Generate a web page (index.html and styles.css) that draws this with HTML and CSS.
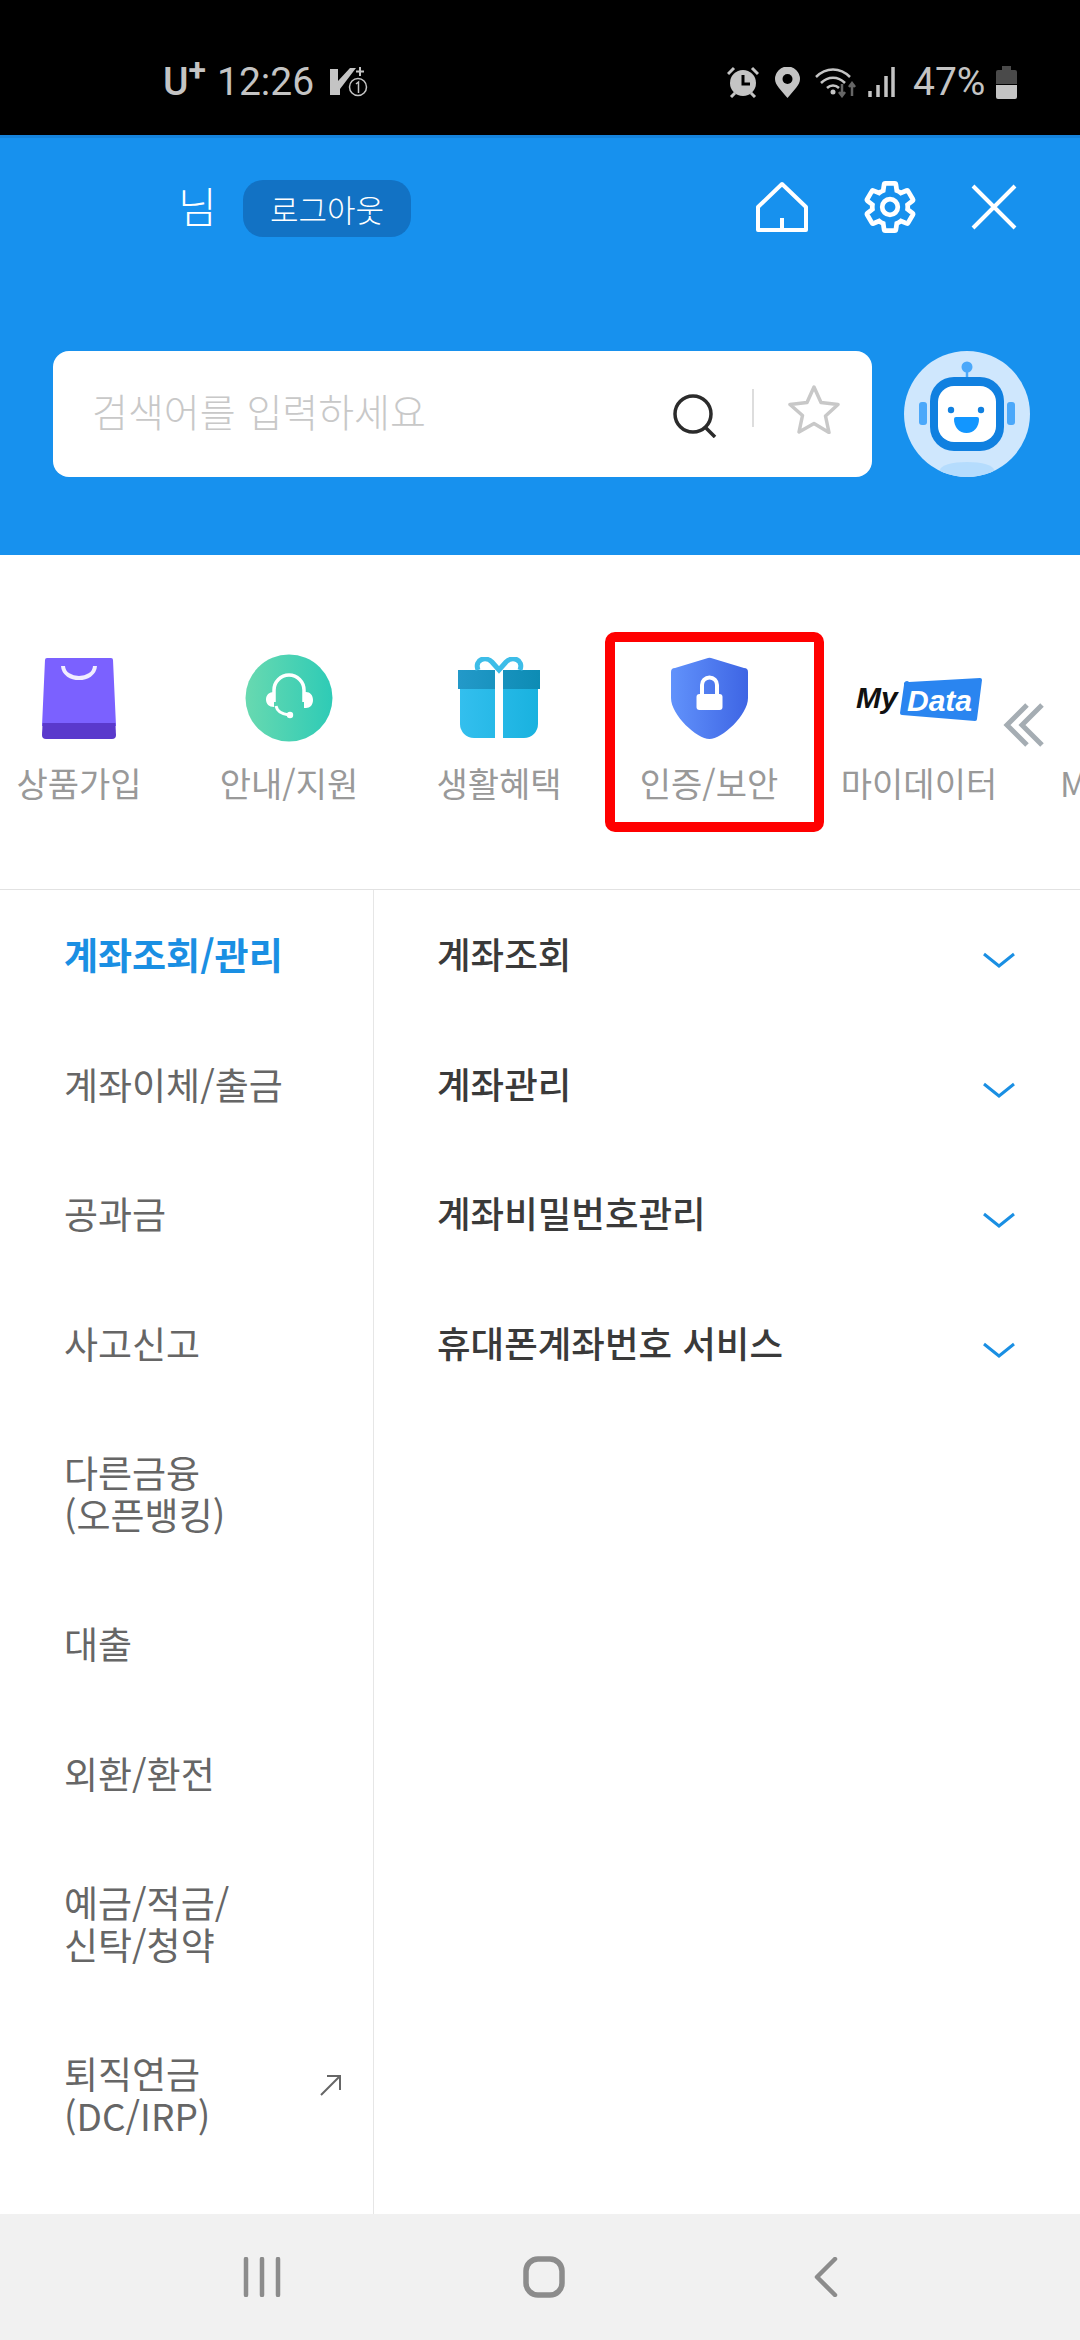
FILE: index.html
```html
<!DOCTYPE html>
<html lang="ko">
<head>
    <meta charset="UTF-8">
    <meta name="viewport" content="width=device-width, initial-scale=1.0">
    <title>전체메뉴</title>
    <link rel="stylesheet" href="styles.css">
</head>
<body>
    <div class="status-bar">
        <div class="carrier">U<sup>+</sup></div>
        <div class="clock">12:26</div>
        <svg class="volte" width="38" height="30" viewBox="0 0 38 30">
            <path d="M0 2h8v12L20 1h6L10 22v6H0z" fill="#c4c4c4"/>
            <path d="M30 0v9M26 4.500h8" stroke="#c4c4c4" stroke-width="2" fill="none"/>
            <circle cx="28" cy="20" r="8.500" fill="#000" stroke="#c4c4c4" stroke-width="1.500"/>
            <path d="M26 17l2.500-2v11" stroke="#c4c4c4" stroke-width="1.500" fill="none"/>
        </svg>
        <div class="status-right">
            <svg width="32" height="32" viewBox="0 0 32 32">
                <circle cx="16" cy="17" r="13" fill="#c4c4c4"/>
                <path d="M16 9v9h7" stroke="#000" stroke-width="3" fill="none"/>
                <path d="M1 8l6-6M31 8l-6-6M4 31l4-4M28 31l-4-4" stroke="#c4c4c4" stroke-width="3"/>
            </svg>
            <svg class="pin" width="25" height="31" viewBox="0 0 25 31">
                <path d="M12.500 31C6 23 0 18 0 12a12.500 12.500 0 0 1 25 0c0 6-6 11-12.500 19z" fill="#c4c4c4"/>
                <circle cx="12.500" cy="12" r="5" fill="#000"/>
            </svg>
            <svg class="wifi" width="42" height="32" viewBox="0 0 42 32">
                <path d="M1 11C11 1 25 1 35 11M6 17c7-7 17-7 24 0M12 22c3.500-3.500 8.500-3.500 12 0" stroke="#c4c4c4" stroke-width="2.500" fill="none"/>
                <circle cx="18" cy="26" r="2.500" fill="#c4c4c4"/>
                <path d="M27 18v12M24 26l3 4 3-4" stroke="#666" stroke-width="2.500" fill="none"/>
                <path d="M37 30V17M34 21l3-4 3 4" stroke="#666" stroke-width="2.500" fill="none"/>
            </svg>
            <svg class="signal" width="27" height="30" viewBox="0 0 27 30">
                <path d="M2 30v-6M10 30V18M18 30V9M25 30V0" stroke="#c4c4c4" stroke-width="3.500" fill="none"/>
            </svg>
            <div class="battery-text">47%</div>
            <svg class="battery" width="21" height="33" viewBox="0 0 21 33">
                <path d="M6 0h9v4H6z" fill="#4a4a4a"/>
                <path d="M2 4h17a2 2 0 0 1 2 2v12H0V6a2 2 0 0 1 2-2z" fill="#4a4a4a"/>
                <path d="M0 19h21v12a2 2 0 0 1-2 2H2a2 2 0 0 1-2-2z" fill="#c4c4c4"/>
            </svg>
        </div>
    </div>

    <header class="app-header">
        <div class="top-row">
            <span class="user-name">님</span>
            <button class="logout-btn">로그아웃</button>
            <div class="top-icons">
                <svg width="54" height="52" viewBox="0 0 54 52">
                    <path d="M27 3L3 26v23h48V26zM27 49V37" stroke="#fff" stroke-width="4" fill="none" stroke-linejoin="round"/>
                </svg>
                <svg width="52" height="52" viewBox="1 1 22 22">
                    <path d="M19.430 12.980c.04-.32.07-.64.07-.98s-.03-.66-.07-.98l2.110-1.650c.19-.15.24-.42.12-.64l-2-3.460c-.12-.22-.39-.3-.61-.22l-2.490 1c-.52-.4-1.080-.73-1.690-.98l-.38-2.650C14.460 2.180 14.250 2 14 2h-4c-.25 0-.46.18-.49.42l-.38 2.650c-.61.25-1.170.59-1.690.98l-2.490-1c-.23-.09-.49 0-.61.22l-2 3.460c-.13.22-.07.49.12.64l2.110 1.650c-.04.32-.07.65-.07.98s.03.66.07.98l-2.110 1.650c-.19.15-.24.42-.12.64l2 3.460c.12.22.39.3.61.22l2.490-1c.52.4 1.080.73 1.690.98l.38 2.650c.03.24.24.42.49.42h4c.25 0 .46-.18.49-.42l.38-2.650c.61-.25 1.170-.59 1.690-.98l2.490 1c.23.09.49 0 .61-.22l2-3.460c.12-.22.07-.49-.12-.64l-2.110-1.650z" stroke="#fff" stroke-width="2" fill="none"/>
                    <circle cx="12" cy="12" r="3.300" stroke="#fff" stroke-width="2" fill="none"/>
                </svg>
                <svg width="46" height="46" viewBox="0 0 46 46">
                    <path d="M2 2l42 42M44 2L2 44" stroke="#fff" stroke-width="4" fill="none"/>
                </svg>
            </div>
        </div>
        <div class="search-row">
            <div class="search-box">
                <span class="search-hint">검색어를 입력하세요</span>
                <svg class="search-icon" width="44" height="44" viewBox="0 0 44 44">
                    <circle cx="20" cy="20" r="18" stroke="#2b2b2b" stroke-width="3.500" fill="none"/>
                    <path d="M32 33l10 10" stroke="#2b2b2b" stroke-width="3.500" fill="none"/>
                </svg>
                <span class="search-sep"></span>
                <svg class="star-icon" width="52" height="50" viewBox="0 0 52 50">
                    <path d="M26 3l7 15.500 17 2-12.500 11.500 3.500 16.500L26 39.500 11 48l3.500-16.500L2 20.500l17-2z" stroke="#c8c8c8" stroke-width="3.500" fill="none" stroke-linejoin="round"/>
                </svg>
            </div>
            <svg class="bot" width="126" height="126" viewBox="0 0 126 126">
                <defs><clipPath id="botClip"><circle cx="63" cy="63" r="63"/></clipPath></defs>
                <circle cx="63" cy="63" r="63" fill="#cfe7fd"/>
                <ellipse cx="63" cy="119" rx="27" ry="8" fill="#b5dcfd" clip-path="url(#botClip)"/>
                <path d="M63 18v9" stroke="#4ba8fa" stroke-width="2.500"/>
                <circle cx="63" cy="16" r="5.500" fill="#4ba8fa"/>
                <rect x="15" y="51" width="8" height="23" rx="3" fill="#4ba8fa"/>
                <rect x="103" y="51" width="8" height="23" rx="3" fill="#4ba8fa"/>
                <rect x="26" y="26" width="74" height="74" rx="24" fill="#1080e0"/>
                <rect x="34" y="35" width="58" height="56" rx="16" fill="#fff"/>
                <circle cx="47" cy="59" r="3.200" fill="#1080e0"/>
                <circle cx="77" cy="59" r="3.200" fill="#1080e0"/>
                <path d="M52 66h21a2 2 0 0 1 2 2c0 8-5 14-12.500 14S50 76 50 68a2 2 0 0 1 2-2z" fill="#1296ff"/>
            </svg>
        </div>
    </header>

    <section class="tabs">
        <div class="tab">
            <div class="tab-icon">
                <svg width="74" height="82" viewBox="0 0 74 82">
                    <path d="M5 1h64a2 2 0 0 1 2 2l3 66H0L3 3a2 2 0 0 1 2-2z" fill="#7b61ff"/>
                    <path d="M.6 66h72.800l.6 12a4 4 0 0 1-4 4H4a4 4 0 0 1-4-4z" fill="#5a39cc"/>
                    <path d="M21 9c1 16 31 16 32 0" stroke="#f1edff" stroke-width="4" fill="none"/>
                </svg>
            </div>
            <div class="tab-label">상품가입</div>
        </div>
        <div class="tab">
            <div class="tab-icon">
                <svg width="88" height="88" viewBox="0 0 88 88">
                    <defs>
                        <linearGradient id="talkGrad"><stop offset="0" stop-color="#68d9b0"/><stop offset="1" stop-color="#2ecbb6"/></linearGradient>
                    </defs>
                    <circle cx="44" cy="44" r="43.500" fill="url(#talkGrad)"/>
                    <path d="M29 48V36a15 15 0 0 1 30 0v12" stroke="#fff" stroke-width="3.500" fill="none"/>
                    <path d="M29 38v15c-5 0-8-3-8-7.500s3-7.500 8-7.500zM59 38v16h2c4 0 7-3 7-8s-3-8-7-8z" fill="#fff"/>
                    <path d="M31 52c1 5 5 8 13 9" stroke="#fff" stroke-width="3" fill="none"/>
                    <circle cx="45" cy="61" r="3.200" fill="#fff"/>
                </svg>
            </div>
            <div class="tab-label">안내/지원</div>
        </div>
        <div class="tab">
            <div class="tab-icon">
                <svg width="82" height="82" viewBox="0 0 82 82">
                    <defs>
                        <linearGradient id="giftBody"><stop offset="0" stop-color="#33bfee"/><stop offset="1" stop-color="#19b2df"/></linearGradient>
                        <linearGradient id="giftLid"><stop offset="0" stop-color="#2399c9"/><stop offset="1" stop-color="#0d8cb4"/></linearGradient>
                    </defs>
                    <path d="M2 31h78v36a14 14 0 0 1-14 14H16A14 14 0 0 1 2 67z" fill="url(#giftBody)"/>
                    <path d="M0 13h82v19H0z" fill="url(#giftLid)"/>
                    <path d="M37 13h8v68h-8z" fill="#fff"/>
                    <path d="M20 13c-4-11 8-14 14-8l7 8 7-8c6-6 18-3 14 8" stroke="#3dbde8" stroke-width="5" fill="none"/>
                </svg>
            </div>
            <div class="tab-label">생활혜택</div>
        </div>
        <div class="tab">
            <div class="tab-icon">
                <svg width="77" height="82" viewBox="0 0 77 82">
                    <defs>
                        <linearGradient id="shieldGrad"><stop offset="0" stop-color="#6192fb"/><stop offset="1" stop-color="#3e65e4"/></linearGradient>
                    </defs>
                    <path d="M37 1a4 4 0 0 1 3 0l33 10a4 4 0 0 1 4 4v26c0 17-26 41-38.500 41S0 58 0 41V15a4 4 0 0 1 4-4z" fill="url(#shieldGrad)"/>
                    <path d="M31 38V28a7.500 7.500 0 0 1 15 0v10" stroke="#fff" stroke-width="4" fill="none"/>
                    <rect x="25.500" y="37" width="26" height="16" rx="3" fill="#fff"/>
                </svg>
            </div>
            <div class="tab-label">인증/보안</div>
        </div>
        <div class="tab">
            <div class="tab-icon">
                <svg width="127" height="48" viewBox="0 0 127 48">
                    <text class="logo-my" x="0" y="34">My</text>
                    <path d="M53 8l71-4a2 2 0 0 1 2 2l-5 39a2 2 0 0 1-2 2l-73-6a2 2 0 0 1-2-2l4-28a3 3 0 0 1 5-3z" fill="#2a85f0"/>
                    <text class="logo-data" x="51" y="37">Data</text>
                </svg>
            </div>
            <div class="tab-label">마이데이터</div>
        </div>
        <div class="tab tab-cut">
            <div class="tab-icon"></div>
            <div class="tab-label">M</div>
        </div>
        <svg class="more-arrows" width="42" height="46" viewBox="0 0 42 46">
            <path d="M25 3L5 23l20 20M40 3L20 23l20 20" stroke="#a5adb3" stroke-width="5" fill="none"/>
        </svg>
        <div class="highlight"></div>
    </section>

    <main class="menu">
        <nav class="menu-left">
            <div class="side-item active">계좌조회/관리</div>
            <div class="side-item">계좌이체/출금</div>
            <div class="side-item">공과금</div>
            <div class="side-item">사고신고</div>
            <div class="side-item">다른금융<br>(오픈뱅킹)</div>
            <div class="side-item">대출</div>
            <div class="side-item">외환/환전</div>
            <div class="side-item">예금/적금/<br>신탁/청약</div>
            <div class="side-item side-link">
                <span>퇴직연금<br>(DC/IRP)</span>
                <svg width="22" height="22" viewBox="0 0 22 22">
                    <path d="M1 21L20 2M7 2h13v14" stroke="#666" stroke-width="2" fill="none"/>
                </svg>
            </div>
        </nav>
        <div class="menu-right">
            <div class="sub-item">
                <span>계좌조회</span>
                <svg width="32" height="16" viewBox="0 0 32 16"><path d="M1 2l15 12L31 2" stroke="#1a8fe3" stroke-width="3" fill="none"/></svg>
            </div>
            <div class="sub-item">
                <span>계좌관리</span>
                <svg width="32" height="16" viewBox="0 0 32 16"><path d="M1 2l15 12L31 2" stroke="#1a8fe3" stroke-width="3" fill="none"/></svg>
            </div>
            <div class="sub-item">
                <span>계좌비밀번호관리</span>
                <svg width="32" height="16" viewBox="0 0 32 16"><path d="M1 2l15 12L31 2" stroke="#1a8fe3" stroke-width="3" fill="none"/></svg>
            </div>
            <div class="sub-item">
                <span>휴대폰계좌번호 서비스</span>
                <svg width="32" height="16" viewBox="0 0 32 16"><path d="M1 2l15 12L31 2" stroke="#1a8fe3" stroke-width="3" fill="none"/></svg>
            </div>
        </div>
    </main>

    <footer class="nav-bar">
        <svg width="38" height="40" viewBox="0 0 38 40">
            <path d="M3 2v36M19 2v36M35 2v36" stroke="#8c8c8c" stroke-width="4.500" stroke-linecap="round" fill="none"/>
        </svg>
        <svg class="nav-home" width="42" height="42" viewBox="0 0 42 42">
            <rect x="3" y="3" width="36" height="36" rx="12" stroke="#8c8c8c" stroke-width="5.500" fill="none"/>
        </svg>
        <svg width="24" height="40" viewBox="0 0 24 40">
            <path d="M21 2L3 20l18 18" stroke="#8c8c8c" stroke-width="4.500" stroke-linecap="round" stroke-linejoin="round" fill="none"/>
        </svg>
    </footer>
</body>
</html>
```

FILE: styles.css
```css
* {
    box-sizing: border-box;
}
body {
    margin: 0;
    width: 1080px;
    height: 2340px;
    display: flex;
    flex-direction: column;
    overflow: hidden;
    background: #fff;
    font-family: "Noto Sans CJK KR", "Noto Sans", sans-serif;
}
svg {
    display: block;
    flex-shrink: 0;
}
/* Status bar */
.status-bar {
    height: 135px;
    flex-shrink: 0;
    background: #000;
    color: #c4c4c4;
    display: flex;
    align-items: center;
    padding: 29px 63px 0 163px;
    font-family: Roboto, sans-serif;
    font-size: 39px;
}
.carrier {
    width: 54px;
    font-weight: 500;
}
.carrier sup {
    font-size: 32px;
    line-height: 0;
    vertical-align: 14px;
    font-weight: 700;
}
.clock {
    width: 113px;
}
.status-right {
    margin-left: auto;
    display: flex;
    align-items: center;
}
.pin {
    margin-left: 16px;
}
.wifi {
    margin-left: 15px;
}
.signal {
    margin-left: 11px;
}
.battery-text {
    margin-left: 18px;
    width: 83px;
}
/* Blue header */
.app-header {
    height: 420px;
    flex-shrink: 0;
    background: #1791ee;
    border-top: 3px solid #1583dc;
    padding: 42px 50px 78px 53px;
}
.top-row {
    height: 57px;
    display: flex;
    align-items: center;
    padding: 0 13px 0 125px;
}
.user-name {
    color: #fff;
    font-size: 42px;
    line-height: 57px;
    font-weight: 300;
    width: 65px;
    margin-top: -8px;
}
.logout-btn {
    width: 168px;
    height: 57px;
    padding: 0;
    border: none;
    border-radius: 20px;
    background: #1272c4;
    color: #fff;
    font-family: inherit;
    font-size: 31px;
    font-weight: 300;
}
.top-icons {
    margin-left: auto;
    margin-top: -3px;
    display: flex;
    align-items: center;
    gap: 55px;
}
.search-row {
    margin-top: 114px;
    display: flex;
    gap: 32px;
}
.search-box {
    width: 819px;
    height: 126px;
    background: #fff;
    border-radius: 16px;
    display: flex;
    align-items: center;
    padding: 0 32px 0 39px;
}
.search-hint {
    color: #c8c8c8;
    font-size: 39px;
    font-weight: 300;
    margin-top: -9px;
}
.search-icon {
    margin-left: auto;
    margin-top: 4px;
}
.search-sep {
    width: 2px;
    height: 38px;
    background: #ddd;
    margin: -12px 34px 0 35px;
}
.star-icon {
    margin-top: -10px;
}
/* Category tabs */
.tabs {
    position: relative;
    height: 335px;
    flex-shrink: 0;
    display: flex;
    margin-left: -26px;
    width: 1106px;
    overflow: hidden;
    padding-top: 95px;
    border-bottom: 1px solid #e2e2e2;
}
.tab {
    width: 210px;
    flex-shrink: 0;
    display: flex;
    flex-direction: column;
    align-items: center;
}
.tab-icon {
    height: 96px;
    display: flex;
    align-items: center;
    justify-content: center;
}
.tab-label {
    margin-top: 14px;
    font-size: 34px;
    line-height: 46px;
    color: #999;
    white-space: nowrap;
}
.tab-cut {
    align-items: flex-start;
    padding-left: 36px;
}
.logo-my {
    font-family: "Liberation Sans", sans-serif;
    font-size: 30px;
    font-weight: 700;
    font-style: italic;
    fill: #111;
}
.logo-data {
    font-family: "Liberation Sans", sans-serif;
    font-size: 30px;
    font-weight: 700;
    font-style: italic;
    fill: #fff;
}
.more-arrows {
    position: absolute;
    left: 1028px;
    top: 147px;
}
.highlight {
    position: absolute;
    left: 631px;
    top: 77px;
    width: 219px;
    height: 200px;
    border: 10px solid #f00;
    border-radius: 10px;
}
/* Menu columns */
.menu {
    flex: 1;
    display: flex;
    min-height: 0;
}
.menu-left {
    width: 374px;
    border-right: 1px solid #e6e6e6;
    flex-shrink: 0;
}
.side-item {
    padding: 44px 0 44px 64px;
    font-size: 37px;
    line-height: 41.500px;
    color: #666;
}
.side-item.active {
    color: #1a8fe3;
    font-weight: 700;
}
.side-link {
    display: flex;
    justify-content: space-between;
    padding-right: 31px;
}
.side-link svg {
    margin-top: 21px;
}
.menu-right {
    flex: 1;
}
.sub-item {
    display: flex;
    align-items: center;
    justify-content: space-between;
    height: 129.800px;
    padding: 0 65px 0 63px;
    font-size: 36.500px;
    font-weight: 500;
    color: #3a3a3a;
}
.sub-item span {
    margin-top: -3px;
}
.sub-item svg {
    margin-top: 11px;
}
/* Android nav bar */
.nav-bar {
    height: 126px;
    flex-shrink: 0;
    background: #f1f1f1;
    display: flex;
    align-items: center;
    padding: 0 242px 0 243px;
    justify-content: space-between;
}
.nav-home {
    margin-right: 8px;
}
```
